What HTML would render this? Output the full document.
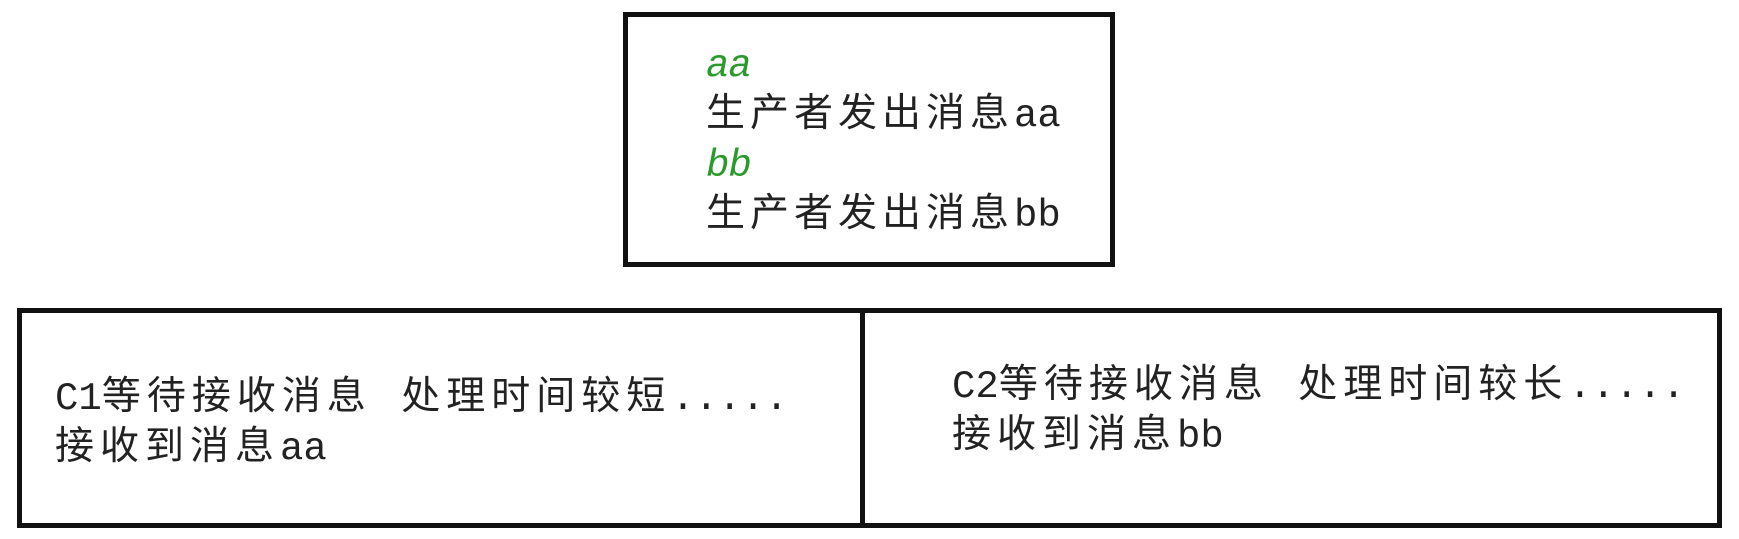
<!DOCTYPE html>
<html><head><meta charset="utf-8"><style>
html,body{margin:0;padding:0;background:#fff;width:1739px;height:539px;overflow:hidden;position:relative}
.box{position:absolute;border:5px solid #111;box-sizing:border-box}
.t{position:absolute;font-family:"Liberation Mono","Noto Sans CJK SC",monospace;font-size:39px;letter-spacing:5px;color:#222;white-space:pre;line-height:50px}
.b{letter-spacing:6px}
.l{letter-spacing:0px}
.g{color:#2a9a2a;font-style:italic;letter-spacing:-1px}
</style></head><body>
<div class="box" style="left:623px;top:12px;width:492px;height:255px"></div>
<div class="t" style="left:706px;top:41px"><span class="g">aa</span>
生产者发出消息<span class="l">aa</span>
<span class="g">bb</span>
生产者发出消息<span class="l">bb</span></div>
<div class="box" style="left:17px;top:308px;width:1705px;height:220px"></div>
<div style="position:absolute;left:860px;top:308px;width:5px;height:220px;background:#111"></div>
<div class="t b" style="left:55px;top:374px"><span class="l">C1</span>等待接收消息 处理时间较短<span class="l">.....</span>
接收到消息<span class="l">aa</span></div>
<div class="t b" style="left:952px;top:362px"><span class="l">C2</span>等待接收消息 处理时间较长<span class="l">.....</span>
接收到消息<span class="l">bb</span></div>
</body></html>
